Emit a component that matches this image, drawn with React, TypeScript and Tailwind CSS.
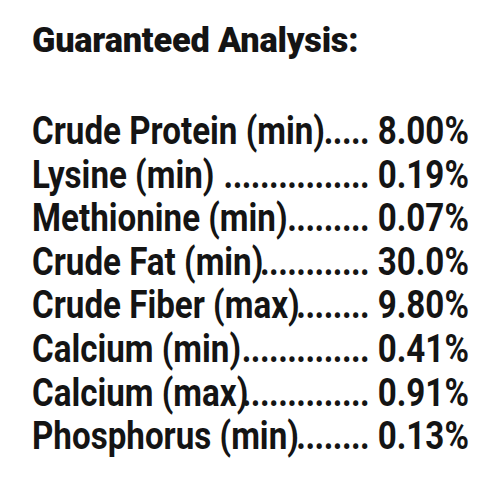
const rows: [string, number, string][] = [
  ['Crude Protein (min)', 5, '8.00%'],
  ['Lysine (min)', 16, '0.19%'],
  ['Methionine (min)', 9, '0.07%'],
  ['Crude Fat (min)', 12, '30.0%'],
  ['Crude Fiber (max)', 8, '9.80%'],
  ['Calcium (min)', 14, '0.41%'],
  ['Calcium (max)', 14, '0.91%'],
  ['Phosphorus (min)', 8, '0.13%'],
];

export default function App() {
  return (
    <div className="w-[500px] h-[481px] overflow-hidden bg-white text-[#141414] font-['Roboto',sans-serif] pl-[32px] pt-[21px]">
      <h1 className="w-[400px] origin-left scale-x-[0.98] text-[35px] leading-[40px] font-black tracking-[-0.2px]">
        Guaranteed Analysis:
      </h1>
      <div className="mt-[49px] w-[514px] origin-left scale-x-[0.85] font-bold">
        {rows.map(([label, count, value]) => (
          <div key={label} className="flex items-baseline text-[39px] leading-[43.6px]">
            <span className="whitespace-nowrap">{label}</span>
            <span className="flex min-w-0 flex-1 justify-end pr-[10px]">
              <span className="whitespace-nowrap tracking-[-0.6px]">{'.'.repeat(count)}</span>
            </span>
            <span className="whitespace-nowrap">{value}</span>
          </div>
        ))}
      </div>
    </div>
  );
}
